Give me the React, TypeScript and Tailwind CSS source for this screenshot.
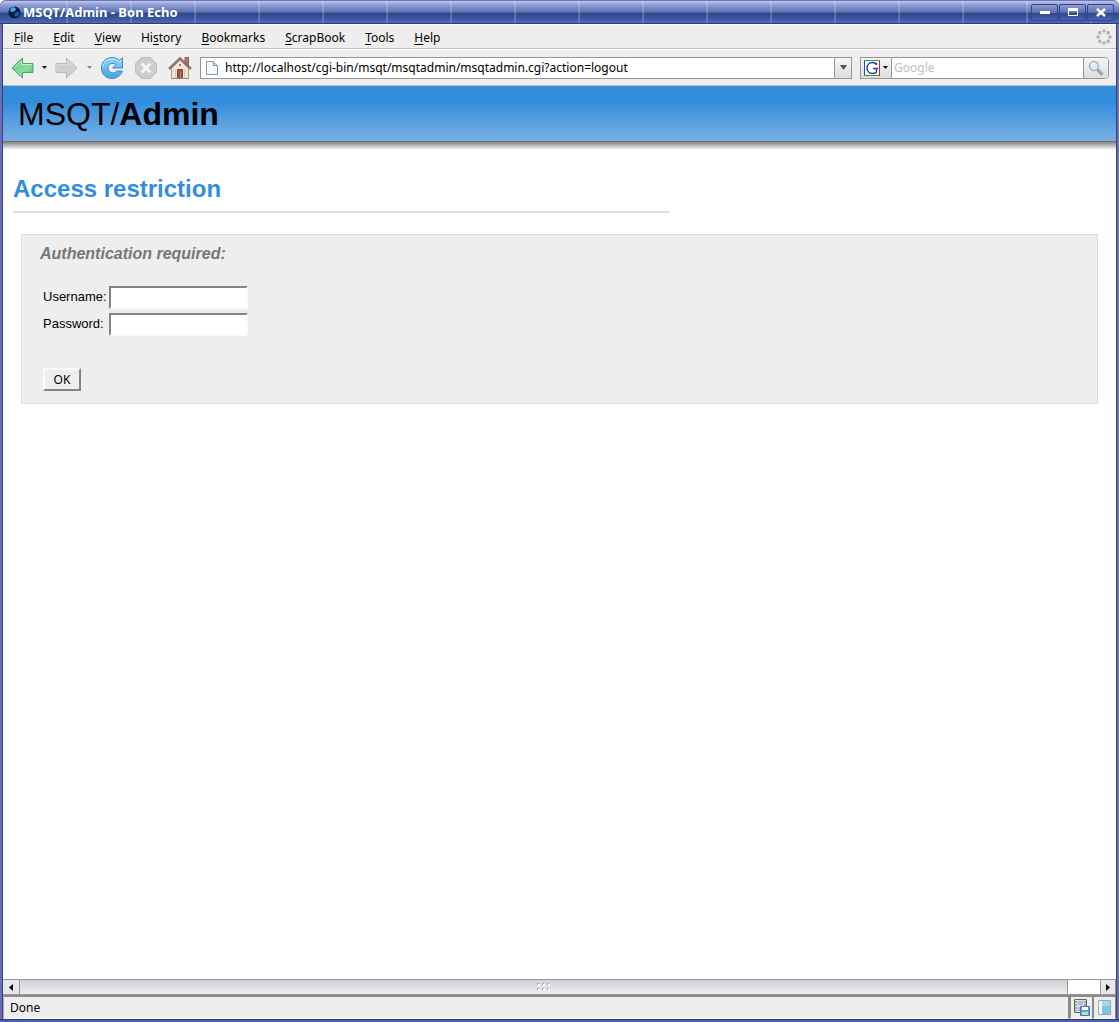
import type { ReactNode } from 'react';

const MENUS = [
  ['', 'F', 'ile'],
  ['', 'E', 'dit'],
  ['', 'V', 'iew'],
  ['Hi', 's', 'tory'],
  ['', 'B', 'ookmarks'],
  ['', 'S', 'crapBook'],
  ['', 'T', 'ools'],
  ['', 'H', 'elp'],
];

const SPINNER_DOTS = [0, 45, 90, 135, 180, 225, 270, 315];

function WindowButton({ label, children }: { label: string; children: ReactNode }) {
  return (
    <button
      aria-label={label}
      className="flex h-[17px] w-[27px] items-center justify-center rounded-xs border border-[#33478c] bg-[linear-gradient(#8d9bd3,#5b70b4_50%,#2f4685_51%,#4a63b4)]"
    >
      <svg width="12" height="10" viewBox="0 0 12 10">
        {children}
      </svg>
    </button>
  );
}

function TitleBar() {
  return (
    <header className="relative flex h-6 items-center overflow-hidden rounded-t-md border-t border-b border-t-[#7272bc] border-b-[#35396f] bg-[linear-gradient(#bcc6e8_0px,#8c9cd4_4px,#5b73b8_11px,#2f4685_12px,#3a54a0_17px,#4d68b8_22px)] pr-[5px] pl-2">
      <div className="absolute inset-0 bg-[repeating-linear-gradient(90deg,transparent_0px,transparent_62px,#ffffff20_62px,#ffffff40_64px)] bg-[position:4px_0]" />
      <svg width="13" height="13" viewBox="0 0 13 13" className="relative">
        <circle cx="6.500" cy="6.500" r="6" fill="#071d4c" />
        <path d="M3 2l3-1 2 2-1 2-3 1-2-1z" fill="#51a9d8" />
        <path d="M8 6l3 0 0 3-3 2-2-2z" fill="#1260a0" />
      </svg>
      <h1 className="relative ml-[2px] flex-1 text-[13px] leading-4 font-bold text-white">MSQT/Admin - Bon Echo</h1>
      <div className="relative flex gap-px">
        <WindowButton label="Minimize">
          <path d="M1 4h10v3H1z" fill="#fff" />
        </WindowButton>
        <WindowButton label="Maximize">
          <path d="M1 1h10v8H1zM2 4v4h8V4z" fill="#fff" fillRule="evenodd" />
        </WindowButton>
        <WindowButton label="Close">
          <path d="M2 2l8 7M10 2l-8 7" stroke="#fff" strokeWidth="2.500" />
        </WindowButton>
      </div>
    </header>
  );
}

function MenuBar() {
  return (
    <nav className="flex h-[25px] items-center border-t border-b border-t-white border-b-[#bbbbbb] bg-[#eeeeee] pr-1 pl-[11px]">
      <div className="flex flex-1 gap-5 pt-[3px]">
        {MENUS.map(([before, key, after]) => (
          <button key={key + after} className="leading-4">
            {before}
            <u className="underline-offset-2">{key}</u>
            {after}
          </button>
        ))}
      </div>
      <svg width="16" height="16" viewBox="0 0 16 16">
        {SPINNER_DOTS.map((angle) => (
          <circle key={angle} cx="8" cy="2" r="1.800" fill="#b0b0b0" transform={`rotate(${angle} 8 8)`} />
        ))}
      </svg>
    </nav>
  );
}

function Caret({ color }: { color: string }) {
  return (
    <svg width="5" height="3" viewBox="0 0 5 3">
      <path d="M0 0h5L2.500 3z" fill={color} />
    </svg>
  );
}

function NavigationBar() {
  return (
    <div className="flex h-[37px] items-center border-t border-b border-t-white border-b-[#bbbbbb] bg-[#eeeeee] pr-[7px] pl-2">
      <button aria-label="Back">
        <svg width="23" height="22" viewBox="0 0 23 22">
          <defs>
            <linearGradient id="back" x1="0" y1="0" x2="1" y2="1">
              <stop offset="0" stopColor="#55c67c" />
              <stop offset=".6" stopColor="#8fdc9c" />
              <stop offset="1" stopColor="#45c070" />
            </linearGradient>
          </defs>
          <path d="M1 11L11.500 1v5.500h10.500v9h-10.500V21z" fill="url(#back)" stroke="#45a56b" />
          <path d="M3 11l7.500-7v3.500H21" fill="none" stroke="#d4f3d6" opacity=".8" />
        </svg>
      </button>
      <button aria-label="Back history" className="ml-2">
        <Caret color="#111111" />
      </button>
      <button aria-label="Forward" className="ml-2">
        <svg width="23" height="22" viewBox="0 0 23 22">
          <path d="M22 11L11.500 1v5.500H1v9h10.500V21z" fill="#cfcfcf" stroke="#b8b8b8" />
          <path d="M2 14.500V7.500h10.500V3.500l8 7.500" fill="none" stroke="#dedede" />
        </svg>
      </button>
      <button aria-label="Forward history" className="ml-[9px]">
        <Caret color="#888888" />
      </button>
      <button aria-label="Reload" className="ml-2">
        <svg width="24" height="24" viewBox="0 0 24 24">
          <defs>
            <linearGradient id="reload" x1="0" y1="0" x2="0" y2="1">
              <stop offset="0" stopColor="#9bd3f6" />
              <stop offset="1" stopColor="#3fa3e8" />
            </linearGradient>
          </defs>
          <path
            d="M19.500 4.500l3-3v10.500H12.500l3.500-3.500c-3.500-2.500-8-.5-8 3.500 0 5 6 6.500 9 3h5.500C20.500 20 16.500 22.500 12 22.500 5.500 22.500 1.500 18 1.500 12S6 1.500 12 1.500c3 0 5.500 1 7.500 3z"
            fill="url(#reload)"
            stroke="#3c8fd2"
          />
          <path d="M3 11c.5-5 4-8 9-8 3 0 5 1 7.500 3.500L21.500 4" fill="none" stroke="#cdeafc" />
        </svg>
      </button>
      <button aria-label="Stop" className="ml-[10px]">
        <svg width="24" height="24" viewBox="0 0 24 24">
          <path d="M7.500 1.500h9l6 6v9l-6 6h-9l-6-6v-9z" fill="#cdcdcd" stroke="#bcbcbc" strokeLinejoin="round" />
          <path d="M7.500 7.500l9 9M16.500 7.500l-9 9" stroke="#f6f6f6" strokeWidth="3" />
        </svg>
      </button>
      <button aria-label="Home" className="ml-[10px]">
        <svg width="24" height="24" viewBox="0 0 24 24">
          <path d="M17 1.500h3.500V10H17z" fill="#bd7065" stroke="#8f6157" />
          <path d="M3.500 12L12 3l8.500 9v10.500h-17z" fill="#f3e5d6" stroke="#b09a8c" />
          <path d="M1 13L12 2.500 23 13" fill="none" stroke="#8f7369" strokeWidth="2.500" />
          <path d="M9.500 13.500h5v9h-5z" fill="#b04a35" stroke="#765047" />
          <path d="M12.500 15v6" stroke="#d97b5d" />
          <path d="M5 14h2.500v8M19 14h-2.500v8" fill="none" stroke="#dcc7b4" />
          <circle cx="12" cy="9" r="1" fill="#775c53" />
          <path d="M3 22.500h18" stroke="#8d8983" />
        </svg>
      </button>

      <div className="ml-2 flex h-[22px] flex-1 border border-[#96969b] bg-white">
        <svg width="13" height="14" viewBox="0 0 13 14" className="mt-[3px] ml-1 shrink-0">
          <path d="M1.500 .5h7l4 4v9h-11z" fill="#f7fafc" stroke="#8295ab" />
          <path d="M8.500 .5v4h4" fill="#d2dde8" stroke="#8295ab" />
        </svg>
        <input
          aria-label="Location"
          defaultValue="http://localhost/cgi-bin/msqt/msqtadmin/msqtadmin.cgi?action=logout"
          className="ml-[7px] min-w-0 flex-1 pt-px outline-none"
        />
        <button
          aria-label="Show history"
          className="flex w-[17px] items-center justify-center border-l border-[#96969b] bg-linear-to-b from-[#f6f6f6] to-[#dddddd]"
        >
          <svg width="7" height="5" viewBox="0 0 7 5">
            <path d="M0 0h7L3.500 5z" fill="#555" />
          </svg>
        </button>
      </div>

      <form className="ml-2 flex h-[22px] w-[249px] overflow-hidden rounded-r-sm border border-[#96969b] bg-white">
        <button
          type="button"
          aria-label="Choose search engine"
          className="flex w-[31px] items-center gap-[3px] border-r border-[#96969b] bg-linear-to-b from-[#f6f6f6] to-[#dddddd] pl-[3px]"
        >
          <svg width="16" height="16" viewBox="0 0 16 16">
            <path d="M0 0h16v16H0z" fill="#fff" />
            <path d="M.5 16V0" stroke="#1f50df" />
            <path d="M0 .5h16M0 15.500h15" stroke="#2aa32f" />
            <path d="M15.500 1v15" stroke="#cf2323" />
            <path
              d="M12.500 5V3M12.500 4.500C11.500 3 10 2.500 8.500 2.500 5 2.500 3 5 3 8s2 5.500 5.500 5.500c1.500 0 3-.5 4-1.500V8.500M9 8.500h5"
              fill="none"
              stroke="#1c38a9"
              strokeWidth="1.400"
            />
          </svg>
          <Caret color="#000000" />
        </button>
        <input aria-label="Search" placeholder="Google" className="min-w-0 flex-1 pt-px pl-[2px] outline-none placeholder:text-[#c0c0c0]" />
        <button
          type="button"
          aria-label="Search the web"
          className="flex w-[25px] items-center justify-center border-l border-[#96969b] bg-linear-to-b from-[#f6f6f6] to-[#dddddd]"
        >
          <svg width="16" height="16" viewBox="0 0 16 16">
            <path d="M9.500 9.500l5 5" stroke="#85888c" strokeWidth="3" />
            <path d="M10 9.500l4.500 4.500" stroke="#d8d8d8" />
            <circle cx="6" cy="6" r="4.500" fill="#d6edfa" stroke="#9eb2c3" strokeWidth="1.500" />
            <path d="M3.500 6C3.500 4.500 4.500 3.500 6 3.500" fill="none" stroke="#fff" strokeWidth="1.500" />
          </svg>
        </button>
      </form>
    </div>
  );
}

function Field({ id, label, type }: { id: string; label: string; type: string }) {
  return (
    <div className="flex h-[27px]">
      <label htmlFor={id} className="w-[66px] pt-[3px]">
        {label}
      </label>
      <input
        id={id}
        type={type}
        className="h-[23px] w-[139px] border-2 border-t-[#848484] border-r-[#fafafa] border-b-[#fafafa] border-l-[#848484] bg-white px-1 outline-none"
      />
    </div>
  );
}

function AdminPage() {
  return (
    <main className="flex-1 bg-white font-['Liberation_Sans',sans-serif]">
      <div className="h-14 border-b border-[#707070] bg-linear-to-b from-[#328edd] from-30% to-[#79afe3] pt-[10px] pl-[15px] text-[32px] leading-9">
        MSQT/<b>Admin</b>
      </div>
      <div className="h-2 bg-linear-to-b from-[#858585] to-white" />
      <h2 className="mt-[25px] ml-[10px] w-[656px] max-w-full border-b-2 border-[#dddddd] pb-2 text-[24px] leading-7 font-bold text-[#328edd]">
        Access restriction
      </h2>
      <form className="mx-[18px] mt-[21px] border border-[#dddddd] bg-[#eeeeee] pt-[9px] pb-3 text-[13px] leading-4">
        <h3 className="pl-[18px] text-[16px] leading-5 font-bold text-[#777777] italic">Authentication required:</h3>
        <div className="mt-[22px] pl-[21px]">
          <Field id="username" label="Username:" type="text" />
          <Field id="password" label="Password:" type="password" />
          <button
            type="button"
            className="mt-7 block h-[23px] w-[38px] border-2 border-t-[#fafafa] border-r-[#848484] border-b-[#848484] border-l-[#fafafa] pt-px font-['Noto_Sans',sans-serif] text-[12px]"
          >
            OK
          </button>
        </div>
      </form>
    </main>
  );
}

function ScrollBar() {
  return (
    <div className="flex h-4 border-t border-b border-[#96969b] bg-white">
      <button aria-label="Scroll left" className="flex w-4 items-center justify-center bg-[#e8e8ea]">
        <svg width="4" height="7" viewBox="0 0 4 7">
          <path d="M4 0v7L0 3.500z" />
        </svg>
      </button>
      <div className="flex flex-1 items-center justify-center border-r border-l border-[#96969b] bg-linear-to-b from-[#cfd0d6] to-[#eeeeef]">
        <svg width="14" height="8" viewBox="0 0 14 8">
          <path d="M0 0h2v2H0zM5 0h2v2H5zM10 0h2v2h-2zM0 5h2v2H0zM5 5h2v2H5zM10 5h2v2h-2z" fill="#adadb1" />
          <path d="M1 1h2v2H1zM6 1h2v2H6zM11 1h2v2h-2zM1 6h2v2H1zM6 6h2v2H6zM11 6h2v2h-2z" fill="#fff" />
        </svg>
      </div>
      <div className="w-8" />
      <button aria-label="Scroll right" className="flex w-4 items-center justify-center border-r border-l border-[#96969b] bg-[#e8e8ea]">
        <svg width="4" height="7" viewBox="0 0 4 7">
          <path d="M0 0v7l4-3.500z" />
        </svg>
      </button>
    </div>
  );
}

function StatusBar() {
  return (
    <footer className="flex h-6 bg-[#eeeeee]">
      <div className="flex-1 border-t-2 border-r border-b border-l border-t-[#8b8b8b] border-r-[#8b8b8b] border-b-[#fafafa] border-l-[#aaaaaa] pt-px pl-[6px] leading-5">
        Done
      </div>
      <button
        aria-label="ScrapBook"
        className="flex w-6 items-center justify-center border-t-2 border-r border-b border-l-2 border-[#8b8b8b] border-b-[#fafafa]"
      >
        <svg width="16" height="17" viewBox="0 0 16 17">
          <path d="M.5 .5h12v13H.5z" fill="#dddddd" stroke="#666" />
          <path d="M2 2v10M11 2v10" stroke="#666" strokeDasharray="2 1" />
          <path d="M4 2h5v4H4zM4 8h5v4H4z" fill="#a9bdd6" />
          <path d="M6.500 7.500h9v9h-9z" fill="#659cec" stroke="#4373c4" />
          <path d="M8 8h6v3H8z" fill="#fff" />
          <path d="M8 13h6v3H8z" fill="#b9e99b" />
        </svg>
      </button>
      <button
        aria-label="Sidebar"
        className="flex w-[23px] items-center justify-center border-t-2 border-r border-b border-l border-[#8b8b8b] border-b-[#fafafa]"
      >
        <svg width="13" height="15" viewBox="0 0 13 15">
          <path d="M.5 .5h12v14H.5z" fill="#f4f9fd" stroke="#92a7c2" />
          <path d="M4 1h8v13H4z" fill="#7fc6df" />
          <path d="M4 1h8v5H4z" fill="#a8d9ea" />
        </svg>
      </button>
    </footer>
  );
}

export default function App() {
  return (
    <div className="flex min-h-screen flex-col rounded-t-md bg-[#6a6eb9] font-['Noto_Sans',sans-serif] text-[12px] text-black">
      <TitleBar />
      <div className="mx-[2px] flex flex-1 flex-col border-r border-l border-[#3a407f]">
        <MenuBar />
        <NavigationBar />
        <AdminPage />
        <ScrollBar />
        <StatusBar />
      </div>
      <div className="h-[3px] border-t border-[#35396f] bg-[#4a62b4]" />
    </div>
  );
}
